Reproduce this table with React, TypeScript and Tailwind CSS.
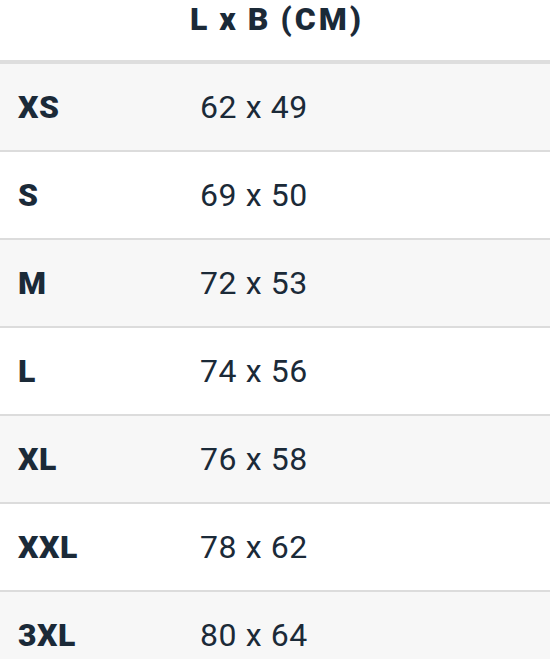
import React from "react";

const rows = [
  ["XS", "62 x 49"],
  ["S", "69 x 50"],
  ["M", "72 x 53"],
  ["L", "74 x 56"],
  ["XL", "76 x 58"],
  ["XXL", "78 x 62"],
  ["3XL", "80 x 64"],
];

export default function App() {
  return (
    <div className="w-[550px] h-[659px] overflow-hidden bg-white text-[#1b2a38]" style={{ fontFamily: "Roboto, 'Liberation Sans', sans-serif" }}>
      <div className="h-[60px] flex items-start border-b-4 border-[#dedede] box-content">
        <div className="w-[190px]" />
        <div className="text-[32px] font-black leading-[38px] tracking-[3px] [word-spacing:-2px]">L x B (CM)</div>
      </div>
      {rows.map(([s, v], i) => (
        <div
          key={s}
          className={`h-[86px] box-content flex items-center border-b-2 border-[#dcdcdc] ${i % 2 === 0 ? "bg-[#f7f7f7]" : "bg-white"}`}
        >
          <div className="w-[200px] pl-[18px] text-[32px] font-black leading-none tracking-[0.5px]">{s}</div>
          <div className="text-[32px] font-normal leading-none tracking-[0.6px]">{v}</div>
        </div>
      ))}
    </div>
  );
}
